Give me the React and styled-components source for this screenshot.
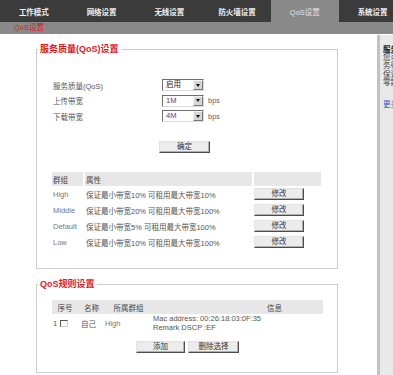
import React from "react";
import styled, { createGlobalStyle } from "styled-components";

const GlobalStyle = createGlobalStyle`
    html, body {
        margin: 0;
        padding: 0;
        background: #fff;
        overflow: hidden;
    }
    body {
        font-family: "Liberation Sans", "Noto Sans CJK SC", sans-serif;
        font-size: 7.5px;
        color: #555;
    }
`;

const tabs = ["工作模式", "网络设置", "无线设置", "防火墙设置", "QoS设置", "系统设置"];

const groups = [
    { name: "High", info: "保证最小带宽10% 可租用最大带宽10%" },
    { name: "Middle", info: "保证最小带宽20% 可租用最大带宽100%" },
    { name: "Default", info: "保证最小带宽5% 可租用最大带宽100%" },
    { name: "Low", info: "保证最小带宽10% 可租用最大带宽100%" },
];

const Page = styled.div`
    width: 393px;
    height: 375px;
    display: flex;
    flex-direction: column;
    overflow: hidden;
`;

const TopNav = styled.nav`
    flex: none;
    display: flex;
    height: 22px;
    background: #3b3b3b;
`;

const Tab = styled.div`
    flex: 0 0 67.75px;
    display: flex;
    align-items: center;
    justify-content: center;
    white-space: nowrap;
    font-weight: ${props => (props.$active ? "normal" : "bold")};
    color: ${props => (props.$active ? "#e2e2e2" : "#f0f0f0")};
    background: ${props => (props.$active ? "#898989" : "transparent")};
`;

const SubBar = styled.div`
    flex: none;
    height: 12px;
    line-height: 12px;
    padding-left: 14px;
    background: #898989;
    color: #e8141b;
`;

const Body = styled.div`
    flex: 1;
    display: flex;
`;

const Main = styled.main`
    flex: 0 0 377px;
    box-sizing: border-box;
    padding: 9.5px 0 0 36px;
`;

const Sidebar = styled.aside`
    flex: 1;
    margin-top: 1px;
    box-sizing: border-box;
    border-left: 3px solid #c2c2c2;
    background: #e9e9e9;
    padding: 10px 0 0 3px;
    overflow: hidden;
    white-space: nowrap;
    color: #444;

    h4 {
        margin: 0;
        font-size: 7.5px;
        line-height: 9px;
        color: #111;
    }
    p {
        margin: 0;
        line-height: 8.3px;
    }
    a {
        display: block;
        margin-top: 11px;
        color: #2b55c8;
        text-decoration: none;
    }
`;

const Fieldset = styled.fieldset`
    width: 302px;
    box-sizing: border-box;
    margin: ${props => props.$top || 0}px 0 0;
    padding: 0;
    border: 1px solid #cdcdcd;
    min-width: 0;
`;

const Legend = styled.legend`
    margin-left: 1px;
    padding: 0 2px;
    font-size: 9px;
    line-height: 11px;
    font-weight: bold;
    color: #e5181e;
`;

const FieldBody = styled.div`
    padding: ${props => props.$top}px 16px ${props => props.$bottom}px 15px;
`;

const FormGrid = styled.div`
    display: grid;
    grid-template-columns: 110px 42px auto;
    grid-auto-rows: 12px;
    row-gap: 3.5px;
    align-items: center;

    label {
        padding-left: 1px;
        color: #555;
    }
`;

const SelectBox = styled.div`
    width: 42px;
    height: 12px;
    box-sizing: border-box;
    display: flex;
    align-items: center;
    border: 1px solid;
    border-color: #6e6e6e #dcdcdc #dcdcdc #6e6e6e;
    background: #fff;
    color: ${props => props.$tint || "#222"};
`;

const SelectText = styled.span`
    flex: 1;
    padding-left: 3px;
    line-height: 10px;
`;

const SelectArrow = styled.span`
    width: 10px;
    height: 10px;
    box-sizing: border-box;
    display: flex;
    align-items: center;
    justify-content: center;
    background: #d6d6d6;
    border: 1px solid;
    border-color: #f4f4f4 #7a7a7a #7a7a7a #f4f4f4;

    &::after {
        content: "";
        border-left: 2.5px solid transparent;
        border-right: 2.5px solid transparent;
        border-top: 3px solid #111;
    }
`;

const Unit = styled.span`
    padding-left: 4px;
    color: #666;
`;

const Button = styled.button`
    width: ${props => props.$w || 50}px;
    height: 12px;
    box-sizing: border-box;
    padding: 0;
    margin-left: ${props => props.$left || 0}px;
    font: inherit;
    line-height: 10px;
    color: #333;
    background: #ececec;
    border: 1px solid;
    border-color: #e2e2e2 #4c4c4c #4c4c4c #e2e2e2;
    box-shadow: inset -1px -1px 0 #b0b0b0;
`;

const ConfirmRow = styled.div`
    margin-top: 19px;
    display: flex;
`;

const GroupTable = styled.div`
    margin-top: 19px;
    display: grid;
    grid-template-columns: 31px 167px 67px;
    column-gap: 2px;
    grid-template-rows: 14px;
    grid-auto-rows: 16px;
`;

const HeadCell = styled.div`
    background: #e7e7e7;
    display: flex;
    align-items: center;
    justify-content: ${props => props.$align || "flex-start"};
    padding: 0 ${props => props.$right || 0}px 0 ${props => props.$left || 0}px;
    color: #444;
    white-space: nowrap;
`;

const Cell = styled.div`
    display: flex;
    align-items: center;
    padding-left: ${props => props.$left || 0}px;
    color: ${props => props.$muted ? "#777" : "#555"};
    white-space: nowrap;
`;

const RuleTable = styled.div`
    width: 271px;
    display: grid;
    grid-template-columns: 26px 27px 47px 171px;
    grid-template-rows: 14px 19px;
`;

const Checkbox = styled.span`
    width: 8px;
    height: 7px;
    box-sizing: border-box;
    margin-left: 3px;
    border: 1px solid;
    border-color: #555 #d0d0d0 #d0d0d0 #555;
    background: #fff;
`;

const InfoLines = styled.div`
    line-height: 8.5px;
    white-space: nowrap;
`;

const ActionRow = styled.div`
    width: 271px;
    margin-top: 8px;
    display: flex;
    justify-content: center;
    gap: 3px;
`;

const App = () => {
    return (
        <>
            <GlobalStyle />
            <Page>
                <TopNav>
                    {tabs.map(tab => (
                        <Tab key={tab} $active={tab === "QoS设置"}>{tab}</Tab>
                    ))}
                </TopNav>
                <SubBar>QoS设置</SubBar>
                <Body>
                    <Main>
                        <Fieldset>
                            <Legend>服务质量(QoS)设置</Legend>
                            <FieldBody $top={24.5} $bottom={18}>
                                <FormGrid>
                                    <label>服务质量(QoS)</label>
                                    <SelectBox>
                                        <SelectText>启用</SelectText>
                                        <SelectArrow />
                                    </SelectBox>
                                    <span />
                                    <label>上传带宽</label>
                                    <SelectBox $tint="#5b3c80">
                                        <SelectText>1M</SelectText>
                                        <SelectArrow />
                                    </SelectBox>
                                    <Unit>bps</Unit>
                                    <label>下载带宽</label>
                                    <SelectBox $tint="#5b3c80">
                                        <SelectText>4M</SelectText>
                                        <SelectArrow />
                                    </SelectBox>
                                    <Unit>bps</Unit>
                                </FormGrid>
                                <ConfirmRow>
                                    <Button $left={107} $w={51}>确定</Button>
                                </ConfirmRow>
                                <GroupTable>
                                    <HeadCell $left={1}>群组</HeadCell>
                                    <HeadCell $left={1}>属性</HeadCell>
                                    <HeadCell />
                                    {groups.map(group => (
                                        <React.Fragment key={group.name}>
                                            <Cell $left={1} $muted>{group.name}</Cell>
                                            <Cell $left={1}>{group.info}</Cell>
                                            <Cell><Button>修改</Button></Cell>
                                        </React.Fragment>
                                    ))}
                                </GroupTable>
                            </FieldBody>
                        </Fieldset>

                        <Fieldset $top={9.5}>
                            <Legend>QoS规则设置</Legend>
                            <FieldBody $top={10.5} $bottom={19}>
                                <RuleTable>
                                    <HeadCell $align="center">序号</HeadCell>
                                    <HeadCell $align="center">名称</HeadCell>
                                    <HeadCell $align="center">所属群组</HeadCell>
                                    <HeadCell $align="flex-end" $right={41}>信息</HeadCell>
                                    <Cell $left={1}>1<Checkbox /></Cell>
                                    <Cell $left={3}>自己</Cell>
                                    <Cell $muted>High</Cell>
                                    <Cell $left={1}>
                                        <InfoLines>
                                            Mac address: 00:26:18:03:0F:35
                                            <br />
                                            Remark DSCP :EF
                                        </InfoLines>
                                    </Cell>
                                </RuleTable>
                                <ActionRow>
                                    <Button $w={49}>添加</Button>
                                    <Button $w={51}>删除选择</Button>
                                </ActionRow>
                            </FieldBody>
                        </Fieldset>
                    </Main>
                    <Sidebar>
                        <h4>服务质量(QoS)</h4>
                        <p>您可以为不同的群组设置带宽，使各项服</p>
                        <p>务得到合理分配。群组带宽可设置最小</p>
                        <p>保证带宽和可租用最大带宽，未使用的</p>
                        <p>零散带宽可以被其他群组使用。</p>
                        <a href="#">更多...</a>
                    </Sidebar>
                </Body>
            </Page>
        </>
    );
};

export default App;
